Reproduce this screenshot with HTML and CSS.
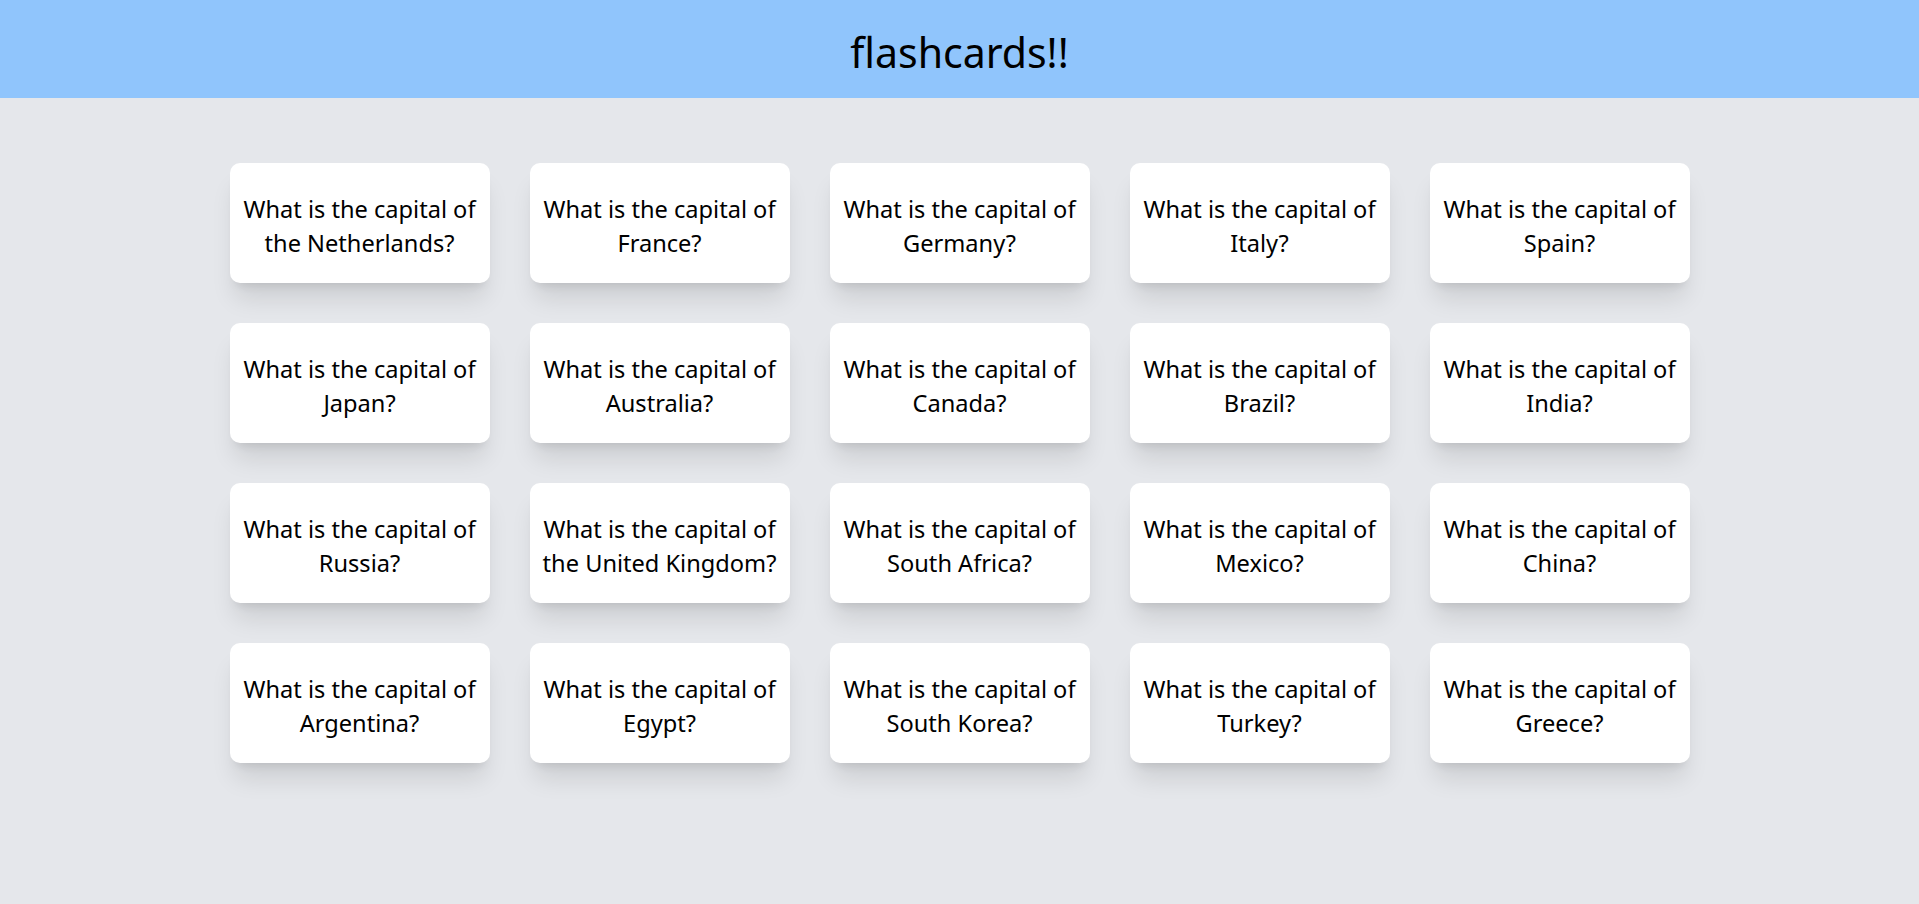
FILE: index.html
```html
<!DOCTYPE html>
<html lang="en">
<head>
<meta charset="utf-8">
<title>flashcards!!</title>
<link rel="stylesheet" href="styles.css">
</head>
<body>
<header class="topbar"><h1 class="title">flashcards!!</h1></header>
<main class="deck">
  <div class="card">What is the capital of the Netherlands?</div>
  <div class="card">What is the capital of France?</div>
  <div class="card">What is the capital of Germany?</div>
  <div class="card">What is the capital of Italy?</div>
  <div class="card">What is the capital of Spain?</div>
  <div class="card">What is the capital of Japan?</div>
  <div class="card">What is the capital of Australia?</div>
  <div class="card">What is the capital of Canada?</div>
  <div class="card">What is the capital of Brazil?</div>
  <div class="card">What is the capital of India?</div>
  <div class="card">What is the capital of Russia?</div>
  <div class="card">What is the capital of the United Kingdom?</div>
  <div class="card">What is the capital of South Africa?</div>
  <div class="card">What is the capital of Mexico?</div>
  <div class="card">What is the capital of China?</div>
  <div class="card">What is the capital of Argentina?</div>
  <div class="card">What is the capital of Egypt?</div>
  <div class="card">What is the capital of South Korea?</div>
  <div class="card">What is the capital of Turkey?</div>
  <div class="card">What is the capital of Greece?</div>
</main>
</body>
</html>
```
FILE: styles.css
```css
html, body {
  margin: 0;
  padding: 0;
}
body {
  background: #e5e7eb;
  font-family: "Noto Sans", "Open Sans", sans-serif;
  color: #000;
  min-height: 904px;
}
.topbar {
  background: #90c5fc;
  height: 98px;
  display: flex;
  align-items: center;
  justify-content: center;
}
.title {
  margin: 6px 0 0;
  font-weight: 400;
  font-size: 41px;
  line-height: 1;
}
.deck {
  display: grid;
  grid-template-columns: repeat(5, 260px);
  grid-auto-rows: 120px;
  gap: 40px;
  justify-content: center;
  padding-top: 65px;
}
.card {
  background: #fff;
  border-radius: 10px;
  box-shadow: 0 20px 25px -5px rgba(0,0,0,0.11), 0 8px 10px -6px rgba(0,0,0,0.1);
  display: flex;
  align-items: center;
  justify-content: center;
  text-align: center;
  padding: 5px 8px 0;
  font-size: 23.6px;
  line-height: 34px;
}
```
